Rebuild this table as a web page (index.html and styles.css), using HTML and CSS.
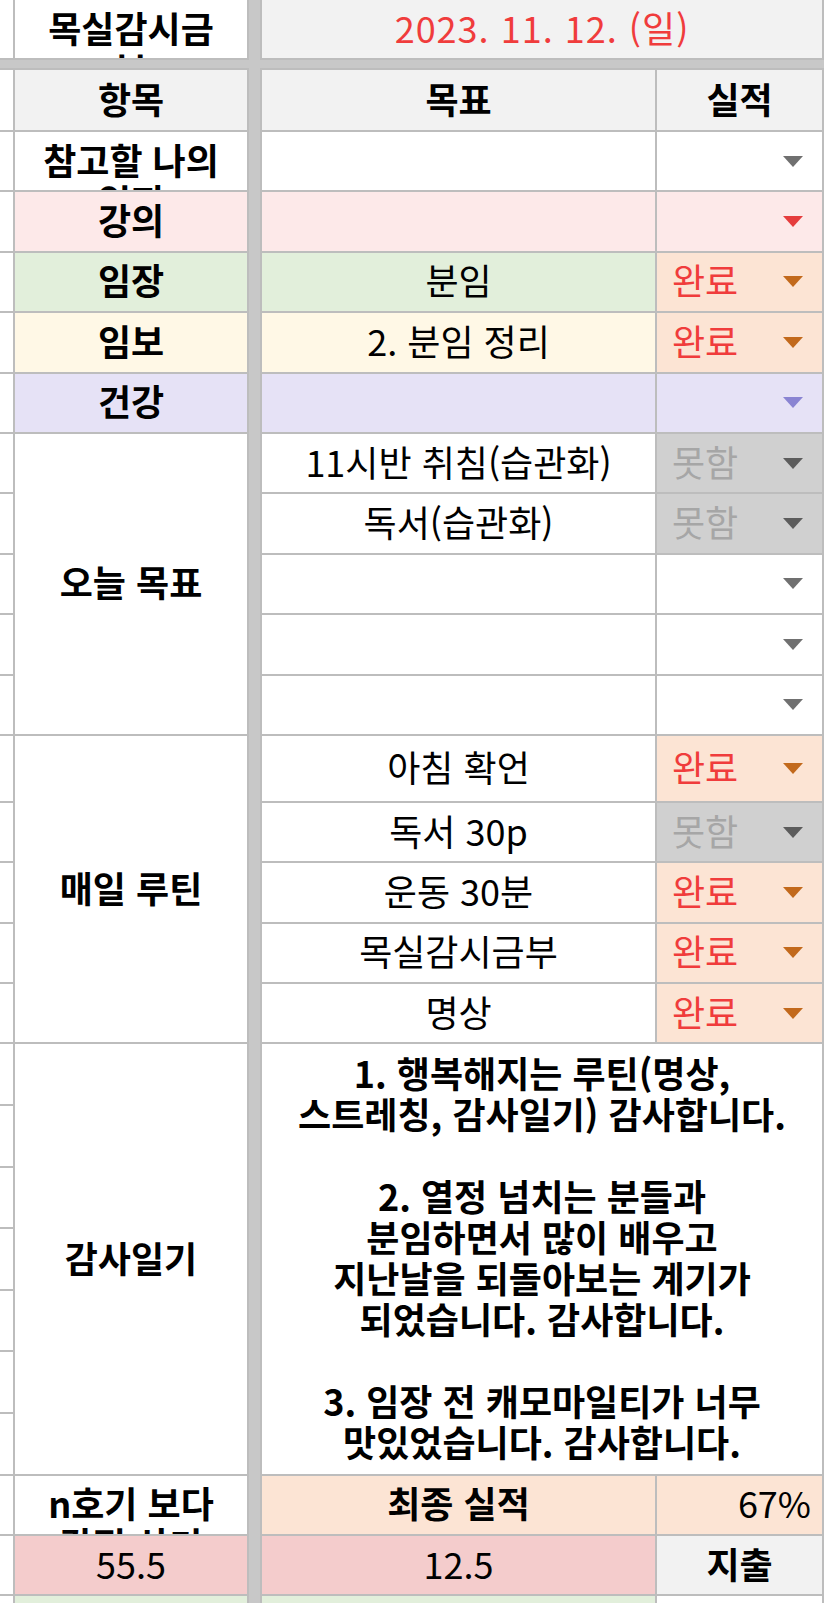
FILE: index.html
```html
<!DOCTYPE html>
<html lang="ko">
<head>
  <meta charset="UTF-8">
  <meta name="viewport" content="width=device-width, initial-scale=1.0">
  <title>목실감시금부</title>
  <link rel="stylesheet" href="styles.css">
</head>
<body>
  <div class="sheet">
    <div class="bar"></div>
    <div class="split"></div>

    <!-- title row -->
    <div class="edge"></div>
    <div class="cell col-a clip"><span>목실감시금<br>부</span></div>
    <div class="cell col-bc gray date">2023. 11. 12. (일)</div>

    <!-- header -->
    <div class="edge"></div>
    <div class="cell col-a gray">항목</div>
    <div class="cell col-b gray bold">목표</div>
    <div class="cell col-c gray bold">실적</div>

    <div class="edge"></div>
    <div class="cell col-a clip"><span>참고할 나의<br>일지</span></div>
    <div class="cell col-b"></div>
    <div class="cell col-c dd"></div>

    <div class="edge"></div>
    <div class="cell col-a pink">강의</div>
    <div class="cell col-b pink"></div>
    <div class="cell col-c dd pink"></div>

    <div class="edge"></div>
    <div class="cell col-a green">임장</div>
    <div class="cell col-b green">분임</div>
    <div class="cell col-c dd peach done">완료</div>

    <div class="edge"></div>
    <div class="cell col-a yellow">임보</div>
    <div class="cell col-b yellow">2. 분임 정리</div>
    <div class="cell col-c dd peach done">완료</div>

    <div class="edge"></div>
    <div class="cell col-a lav">건강</div>
    <div class="cell col-b lav"></div>
    <div class="cell col-c dd lav"></div>

    <!-- 오늘 목표 -->
    <div class="edge"></div>
    <div class="cell col-a span5">오늘 목표</div>
    <div class="cell col-b">11시반 취침(습관화)</div>
    <div class="cell col-c dd miss">못함</div>
    <div class="edge"></div>
    <div class="cell col-b">독서(습관화)</div>
    <div class="cell col-c dd miss">못함</div>
    <div class="edge"></div>
    <div class="cell col-b"></div>
    <div class="cell col-c dd"></div>
    <div class="edge"></div>
    <div class="cell col-b"></div>
    <div class="cell col-c dd"></div>
    <div class="edge"></div>
    <div class="cell col-b"></div>
    <div class="cell col-c dd"></div>

    <!-- 매일 루틴 -->
    <div class="edge"></div>
    <div class="cell col-a span5">매일 루틴</div>
    <div class="cell col-b">아침 확언</div>
    <div class="cell col-c dd peach done">완료</div>
    <div class="edge"></div>
    <div class="cell col-b">독서 30p</div>
    <div class="cell col-c dd miss">못함</div>
    <div class="edge"></div>
    <div class="cell col-b">운동 30분</div>
    <div class="cell col-c dd peach done">완료</div>
    <div class="edge"></div>
    <div class="cell col-b">목실감시금부</div>
    <div class="cell col-c dd peach done">완료</div>
    <div class="edge"></div>
    <div class="cell col-b">명상</div>
    <div class="cell col-c dd peach done">완료</div>

    <!-- 감사일기 -->
    <div class="edge"></div>
    <div class="cell col-a span7">감사일기</div>
    <div class="cell col-bc span7 diary">
      1. 행복해지는 루틴(명상,<br>
      스트레칭, 감사일기) 감사합니다.<br>
      <br>
      2. 열정 넘치는 분들과<br>
      분임하면서 많이 배우고<br>
      지난날을 되돌아보는 계기가<br>
      되었습니다. 감사합니다.<br>
      <br>
      3. 임장 전 캐모마일티가 너무<br>
      맛있었습니다. 감사합니다.
    </div>
    <div class="edge"></div>
    <div class="edge"></div>
    <div class="edge"></div>
    <div class="edge"></div>
    <div class="edge"></div>
    <div class="edge"></div>

    <!-- totals -->
    <div class="edge"></div>
    <div class="cell col-a clip"><span>n호기 보다<br>감정 상기</span></div>
    <div class="cell col-b peach bold">최종 실적</div>
    <div class="cell col-c peach right">67%</div>

    <div class="edge"></div>
    <div class="cell col-a rose regular">55.5</div>
    <div class="cell col-b rose">12.5</div>
    <div class="cell col-c gray bold">지출</div>

    <div class="edge"></div>
    <div class="cell col-a green"></div>
    <div class="cell col-b green"></div>
    <div class="cell col-c"></div>
  </div>
</body>
</html>
```

FILE: styles.css
```css
:root {
  --line: #bdbdbd;
  --frozen: #c8c8c8;
  --gray: #f2f2f2;
  --pink: #fde9e9;
  --green: #e2efdb;
  --yellow: #fff8e6;
  --lav: #e6e2f6;
  --peach: #fce4d4;
  --miss: #d0d0d0;
  --rose: #f4cccc;
  --red: #f03c3c;
}

body {
  margin: 0;
  background: #fff;
  color: #000;
  font-family: "Noto Sans CJK KR", "Noto Sans", sans-serif;
  font-size: 36px;
  overflow: hidden;
}

.sheet {
  display: grid;
  width: 824px;
  grid-template-columns: 13px 232px 11px 393px 165px 0px;
  grid-template-rows: 58px 8px 60px repeat(10, 58.4px) 65px repeat(4, 58.4px) repeat(7, 59.6px) 58.4px 58.4px 40px;
  gap: 2px;
  background: var(--line);
}

/* frozen pane dividers */
.bar {
  grid-column: 1 / -1;
  grid-row: 2;
  background: var(--frozen);
}

.split {
  grid-column: 3;
  grid-row: 1 / -1;
  background: var(--frozen);
}

.edge {
  grid-column: 1;
  background: #fff;
}

.cell {
  display: flex;
  align-items: center;
  justify-content: center;
  overflow: hidden;
  white-space: nowrap;
  line-height: 41px;
  padding-bottom: 4px;
  box-sizing: border-box;
  background: #fff;
}

.col-a {
  grid-column: 2;
  font-weight: 700;
}

.col-b {
  grid-column: 4;
}

.col-c {
  grid-column: 5;
}

.col-bc {
  grid-column: 4 / span 2;
}

.span5 {
  grid-row: span 5;
}

.span7 {
  grid-row: span 7;
}

.bold {
  font-weight: 700;
}

.regular {
  font-weight: 400;
}

/* wrapped text that Excel clips at the cell bottom */
.clip span {
  display: block;
  height: 41px;
  white-space: normal;
  text-align: center;
}

.date {
  color: var(--red);
  letter-spacing: 1px;
}

.diary {
  white-space: normal;
  text-align: center;
  font-weight: 700;
}

.right {
  justify-content: flex-end;
  padding-right: 11px;
}

/* fills */
.gray { background: var(--gray); }
.pink { background: var(--pink); }
.green { background: var(--green); }
.yellow { background: var(--yellow); }
.lav { background: var(--lav); }
.peach { background: var(--peach); }
.miss { background: var(--miss); color: #a6a6a6; }
.rose { background: var(--rose); }

.done {
  color: var(--red);
}

/* dropdown cells */
.dd {
  justify-content: flex-start;
  padding-left: 15px;
  padding-right: 19px;
}

.dd::after {
  content: "";
  margin-left: auto;
  margin-top: 4px;
  width: 0;
  height: 0;
  border-left: 10px solid transparent;
  border-right: 10px solid transparent;
  border-top: 11px solid #707070;
}

.dd.pink::after { border-top-color: #e53d3d; }
.dd.peach::after { border-top-color: #c2691c; }
.dd.lav::after { border-top-color: #8a84d2; }
.dd.miss::after { border-top-color: #5c5c5c; }
```
